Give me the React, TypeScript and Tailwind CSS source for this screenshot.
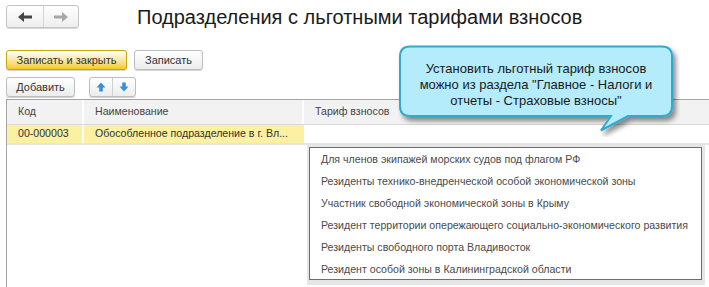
import React from "react";

const tariffs = [
  "Для членов экипажей морских судов под флагом РФ",
  "Резиденты технико-внедренческой особой экономической зоны",
  "Участник свободной экономической зоны в Крыму",
  "Резидент территории опережающего социально-экономического развития",
  "Резиденты свободного порта Владивосток",
  "Резидент особой зоны в Калининградской области",
];

function Arrow({ dir, color }: { dir: "left" | "right"; color: string }) {
  return (
    <svg width="14" height="10" viewBox="0 0 14 10" className={dir === "right" ? "rotate-180" : ""}>
      <path d="M0 5 L6 0 L6 3.5 L14 3.5 L14 6.5 L6 6.5 L6 10 Z" fill={color} />
    </svg>
  );
}

function SmallArrow({ up }: { up?: boolean }) {
  return (
    <svg width="10" height="10" viewBox="0 0 10 10" className={up ? "" : "rotate-180"}>
      <path d="M5 0.5 L9.5 5.5 L6.8 5.5 L6.8 9.5 L3.2 9.5 L3.2 5.5 L0.5 5.5 Z" fill="#3b8fd8" />
    </svg>
  );
}

function Btn({ children, className = "" }: { children: React.ReactNode; className?: string }) {
  return (
    <div
      className={
        "h-[20px] flex items-center justify-center rounded-[3px] border border-[#bcbcbc] bg-gradient-to-b from-white to-[#ececec] text-[11px] text-[#333] shadow-[0_1px_0_#d6d6d6] " +
        className
      }
    >
      {children}
    </div>
  );
}

export default function App() {
  return (
    <div className="relative w-[709px] h-[287px] overflow-hidden bg-white font-['Liberation_Sans',Arial,sans-serif] text-[#333]">
      {/* header */}
      <div className="flex items-center pt-[5px] pl-[6px]">
        <div className="flex h-[23px] w-[73px] rounded-[3px] border border-[#c4c4c4] bg-gradient-to-b from-white to-[#eeeeee] shadow-[0_1px_0_#d8d8d8]">
          <div className="flex w-[37px] items-center justify-center border-r border-[#d4d4d4]">
            <Arrow dir="left" color="#454545" />
          </div>
          <div className="flex flex-1 items-center justify-center">
            <Arrow dir="right" color="#a8a8a8" />
          </div>
        </div>
        <h1 className="ml-[58px] whitespace-nowrap text-[20px] leading-none text-[#1a1a1a]">
          Подразделения с льготными тарифами взносов
        </h1>
      </div>

      {/* command bar */}
      <div className="mt-[22px] flex gap-[7px] pl-[6px]">
        <Btn className="w-[121px] border-[#c8a800] from-[#fbe44a] to-[#f2cc00] text-[#3a3000]">
          Записать и закрыть
        </Btn>
        <Btn className="w-[69px]">Записать</Btn>
      </div>

      <div className="mt-[7px] flex items-center pl-[6px]">
        <Btn className="w-[69px]">Добавить</Btn>
        <div className="ml-[14px] flex h-[20px] w-[47px] rounded-[3px] border border-[#bcbcbc] bg-gradient-to-b from-white to-[#ececec] shadow-[0_1px_0_#d6d6d6]">
          <div className="flex w-[23px] items-center justify-center border-r border-[#d0d0d0]">
            <SmallArrow up />
          </div>
          <div className="flex flex-1 items-center justify-center">
            <SmallArrow />
          </div>
        </div>
      </div>

      {/* table */}
      <div className="ml-[6px] mt-[2px] h-[200px] border-l border-t border-[#a5a5a5] text-[10.6px]">
        <div className="flex h-[25px] border-b border-[#d9d9d9] bg-[#f2f2f2] text-[#444]">
          <div className="flex w-[77px] items-center border-r-2 border-white pl-[11px]">Код</div>
          <div className="flex w-[220px] items-center border-r-2 border-white pl-[11px]">Наименование</div>
          <div className="flex flex-1 items-center pl-[11px]">Тариф взносов</div>
        </div>
        <div className="flex h-[20px] border-b-2 border-[#e4e4e4] text-[#333]">
          <div className="flex w-[77px] items-center border-r-2 border-white bg-[#fcf0a2] pl-[11px]">00-000003</div>
          <div className="flex w-[220px] items-center whitespace-nowrap bg-[#fcf0a2] pl-[11px]">
            Обособленное подразделение в г. Вл...
          </div>
          <div className="flex-1" />
        </div>
      </div>

      {/* dropdown list */}
      <div className="absolute left-[307px] top-[145px] w-[398px] h-[140px] bg-[#e6e6e6] p-[2px]">
        <div className="h-[133px] w-[393px] border border-[#6e6e6e] bg-white pt-[1px] text-[10.6px] text-[#4a4a4a]">
          {tariffs.map((t) => (
            <div key={t} className="flex h-[22px] items-center whitespace-nowrap pl-[11px]">
              {t}
            </div>
          ))}
        </div>
      </div>

      {/* callout */}
      <div className="absolute left-[396px] top-[43px] w-[284px] h-[94px]">
        <svg width="284" height="94" viewBox="0 0 284 94" className="absolute inset-0">
          <defs>
            <filter id="sh" x="-10%" y="-10%" width="130%" height="140%">
              <feDropShadow dx="3" dy="4" stdDeviation="2.5" floodColor="#000" floodOpacity="0.45" />
            </filter>
          </defs>
          <path
            d="M14 3.5 H266 Q276 3.5 276 13.5 V63 Q276 73 266 73 H232 L205 87.5 L215 73 H14 Q4 73 4 63 V13.5 Q4 3.5 14 3.5 Z"
            fill="#b4ecfb"
            stroke="#33a9cd"
            strokeWidth="2"
            filter="url(#sh)"
          />
        </svg>
        <div className="absolute left-[4px] top-[18px] w-[272px] whitespace-nowrap text-center text-[13px] leading-[16px] text-[#1a1a1a]">
          Установить льготный тариф взносов
          <br />
          можно из раздела "Главное - Налоги и
          <br />
          отчеты - Страховые взносы"
        </div>
      </div>
    </div>
  );
}
